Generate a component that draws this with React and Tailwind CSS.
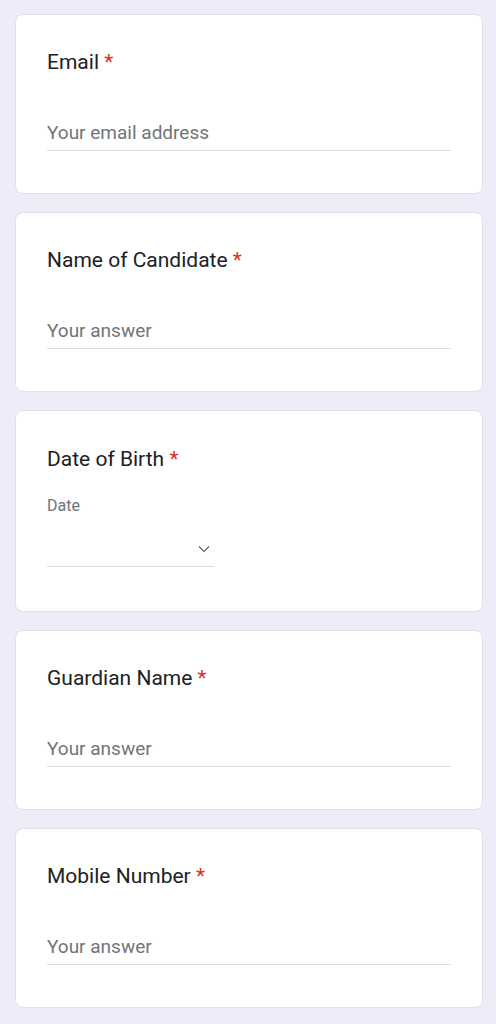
const TextQuestion = ({ title, placeholder }) => (
  <div className="h-[180px] bg-white rounded-lg border border-[#e4e0ea] px-[31px] pt-[35px]">
    <div className="text-[21px] leading-[24px] text-[#202124]">
      {title} <span className="text-[#d93025]">*</span>
    </div>
    <div className="mt-[47px] pb-[5px] border-b border-[#dadce0] text-[19px] leading-[24px] text-[#70757a]">
      {placeholder}
    </div>
  </div>
);

const DateQuestion = () => (
  <div className="h-[202px] bg-white rounded-lg border border-[#e4e0ea] px-[31px] pt-[36px]">
    <div className="text-[21px] leading-[24px] text-[#202124]">
      Date of Birth <span className="text-[#d93025]">*</span>
    </div>
    <div className="mt-[25px] text-[16px] leading-[20px] text-[#70757a]">Date</div>
    <div className="w-[167px] h-[51px] border-b border-[#dadce0] flex items-center justify-end pr-[4px] pt-[15px]">
      <svg width="12" height="8" viewBox="0 0 12 8" fill="none">
        <path d="M1 1.5L6 6.5L11 1.5" stroke="#5f6368" strokeWidth="1.2" />
      </svg>
    </div>
  </div>
);

export default function App() {
  return (
    <div
      className="min-h-[1024px] bg-[#f0ebf8] pl-[15px] pr-[13px] pt-[14px] pb-4 flex flex-col gap-[18px]"
      style={{ fontFamily: "Roboto, 'Liberation Sans', sans-serif" }}
    >
      <TextQuestion title="Email" placeholder="Your email address" />
      <TextQuestion title="Name of Candidate" placeholder="Your answer" />
      <DateQuestion />
      <TextQuestion title="Guardian Name" placeholder="Your answer" />
      <TextQuestion title="Mobile Number" placeholder="Your answer" />
    </div>
  );
}
